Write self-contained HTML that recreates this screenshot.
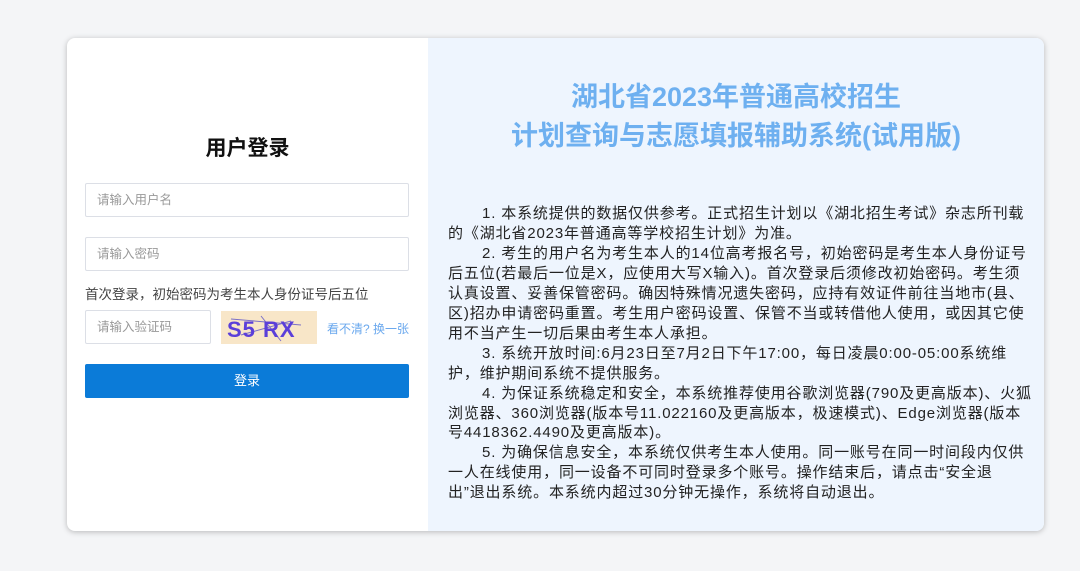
<!DOCTYPE html>
<html><head><meta charset="utf-8"><style>
body{margin:0;width:1080px;height:571px;background:#f4f5f7;font-family:"Liberation Sans","Noto Sans CJK SC",sans-serif;position:relative;overflow:hidden}
.card{position:absolute;left:67px;top:38px;width:977px;height:493px;border-radius:8px;background:#fff;box-shadow:0 1px 6px rgba(0,0,0,.25);overflow:hidden}
.right{position:absolute;left:361px;top:0;width:616px;height:493px;background:#eef5fe}
.abs{position:absolute}
h1{position:absolute;left:0;width:361px;top:94px;margin:0;text-align:center;font-size:21px;font-weight:bold;color:#111}
.inp{position:absolute;border:1px solid #dcdfe6;border-radius:2px;background:#fff;color:#999;font-size:12.5px;box-sizing:border-box;padding-left:11px;line-height:32px}
.title{position:absolute;left:0;width:616px;text-align:center;color:#6eb0f0;font-size:27px;font-weight:bold;line-height:39px;top:40px}
.txt{position:absolute;left:20px;top:166px;font-size:15px;letter-spacing:0.85px;line-height:19.95px;color:#222;white-space:nowrap}
.in{padding-left:34px}
</style></head><body>
<div class="card">
<h1>用户登录</h1>
<div class="inp" style="left:18px;top:145px;width:324px;height:34px">请输入用户名</div>
<div class="inp" style="left:18px;top:199px;width:324px;height:34px">请输入密码</div>
<div class="abs" style="left:18px;top:245px;font-size:13.5px;color:#444">首次登录，初始密码为考生本人身份证号后五位</div>
<div class="inp" style="left:18px;top:272px;width:126px;height:34px">请输入验证码</div>
<div class="abs" style="left:154px;top:273px;width:96px;height:33px;background:#f8e6c8;overflow:hidden">
<svg width="96" height="33"><path d="M10 8 L80 14 M20 24 L70 10 M40 5 L60 30" stroke="#7a6fc8" stroke-width="1" fill="none"/>
<text x="6" y="26" font-family="Liberation Sans" font-size="22" font-weight="bold" fill="#5b3fd9" letter-spacing="1">S5 RX</text></svg></div>
<div class="abs" style="left:260px;top:282px;font-size:12px;color:#6aa8ee">看不清? 换一张</div>
<div class="abs" style="left:18px;top:326px;width:324px;height:34px;background:#0b7bd8;border-radius:2px;color:#fff;font-size:13px;text-align:center;line-height:34px">登录</div>
<div class="right">
<div class="title">湖北省2023年普通高校招生<br>计划查询与志愿填报辅助系统(试用版)</div>
<div class="txt">
<div class="in">1. 本系统提供的数据仅供参考。正式招生计划以《湖北招生考试》杂志所刊载</div>
<div>的《湖北省2023年普通高等学校招生计划》为准。</div>
<div class="in">2. 考生的用户名为考生本人的14位高考报名号，初始密码是考生本人身份证号</div>
<div>后五位(若最后一位是X，应使用大写X输入)。首次登录后须修改初始密码。考生须</div>
<div>认真设置、妥善保管密码。确因特殊情况遗失密码，应持有效证件前往当地市(县、</div>
<div>区)招办申请密码重置。考生用户密码设置、保管不当或转借他人使用，或因其它使</div>
<div>用不当产生一切后果由考生本人承担。</div>
<div class="in">3. 系统开放时间:6月23日至7月2日下午17:00，每日凌晨0:00-05:00系统维</div>
<div>护，维护期间系统不提供服务。</div>
<div class="in">4. 为保证系统稳定和安全，本系统推荐使用谷歌浏览器(790及更高版本)、火狐</div>
<div>浏览器、360浏览器(版本号11.022160及更高版本，极速模式)、Edge浏览器(版本</div>
<div>号4418362.4490及更高版本)。</div>
<div class="in">5. 为确保信息安全，本系统仅供考生本人使用。同一账号在同一时间段内仅供</div>
<div>一人在线使用，同一设备不可同时登录多个账号。操作结束后，请点击“安全退</div>
<div>出”退出系统。本系统内超过30分钟无操作，系统将自动退出。</div>
</div>
</div>
</div>
</body></html>
